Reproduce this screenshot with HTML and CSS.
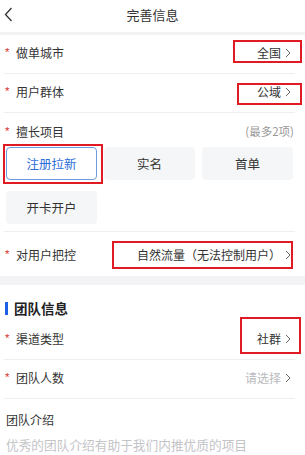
FILE: index.html
```html
<!DOCTYPE html>
<html lang="zh-CN">
<head>
<meta charset="utf-8">
<title>完善信息</title>
<link rel="stylesheet" href="styles.css">
</head>
<body>
<div class="page">
  <header class="topbar">
    <svg class="back" width="9" height="15" viewBox="0 0 9 15"><path d="M7.5 1 L1.5 7.5 L7.5 14" fill="none" stroke="#333" stroke-width="1.3"/></svg>
    <div class="title">完善信息</div>
  </header>
  <div class="band band-thin"></div>

  <section class="section">
    <div class="row">
      <div class="label"><span class="star">*</span>做单城市</div>
      <div class="value">全国<svg class="chev" width="6" height="10" viewBox="0 0 6 10"><path d="M1 1 L5 5 L1 9" fill="none" stroke="#666" stroke-width="1"/></svg></div>
      <span class="mark mark-city"></span>
    </div>
    <div class="row">
      <div class="label"><span class="star">*</span>用户群体</div>
      <div class="value">公域<svg class="chev" width="6" height="10" viewBox="0 0 6 10"><path d="M1 1 L5 5 L1 9" fill="none" stroke="#666" stroke-width="1"/></svg></div>
      <span class="mark mark-group"></span>
    </div>
    <div class="skills">
      <div class="skills-head">
        <div class="label"><span class="star">*</span>擅长项目</div>
        <div class="hint">(最多2项)</div>
      </div>
      <div class="chips">
        <div class="chip chip-on">注册拉新<span class="mark mark-chip"></span></div>
        <div class="chip">实名</div>
        <div class="chip">首单</div>
        <div class="chip">开卡开户</div>
      </div>
    </div>
    <div class="row row-tall">
      <div class="label"><span class="star">*</span>对用户把控</div>
      <div class="value">自然流量（无法控制用户）<svg class="chev" width="6" height="10" viewBox="0 0 6 10"><path d="M1 1 L5 5 L1 9" fill="none" stroke="#666" stroke-width="1"/></svg></div>
      <span class="mark mark-control"></span>
    </div>
  </section>

  <div class="band band-thick"></div>

  <section class="section">
    <div class="sec-title"><span class="bar"></span>团队信息</div>
    <div class="row">
      <div class="label"><span class="star">*</span>渠道类型</div>
      <div class="value">社群<svg class="chev" width="6" height="10" viewBox="0 0 6 10"><path d="M1 1 L5 5 L1 9" fill="none" stroke="#666" stroke-width="1"/></svg></div>
      <span class="mark mark-channel"></span>
    </div>
    <div class="row">
      <div class="label"><span class="star">*</span>团队人数</div>
      <div class="value value-empty">请选择<svg class="chev" width="6" height="10" viewBox="0 0 6 10"><path d="M1 1 L5 5 L1 9" fill="none" stroke="#666" stroke-width="1"/></svg></div>
    </div>
    <div class="intro">
      <div class="intro-label">团队介绍</div>
      <div class="intro-ph">优秀的团队介绍有助于我们内推优质的项目</div>
    </div>
  </section>
</div>
</body>
</html>
```

FILE: styles.css
```css
* { box-sizing: border-box; }
html, body { margin: 0; padding: 0; background: #fff; }
body {
  font-family: "Noto Sans CJK SC", "Noto Sans", "Liberation Sans", sans-serif;
  color: #333;
  width: 305px;
  overflow: hidden;
}
.page { width: 305px; height: 455px; overflow: hidden; }

.topbar {
  position: relative;
  height: 32px;
  display: flex;
  align-items: center;
  justify-content: center;
}
.back { position: absolute; left: 4px; top: 7px; }
.title { font-size: 13px; line-height: 17px; margin-top: -3px; color: #333; }

.band { background: #f3f3f5; }
.band-thin { height: 3px; }
.band-thick { height: 9px; }

.section { padding: 0 10px 0 4px; }

.row {
  position: relative;
  display: flex;
  align-items: center;
  justify-content: space-between;
  padding: 9px 4px 12px 1px;
  border-bottom: 1px solid #efeff1;
  line-height: 17px;
}
.row-tall { padding: 14px 4px 13px 1px; border-bottom: none; }

.label { font-size: 12px; color: #333; display: flex; align-items: center; }
.star {
  display: inline-block;
  width: 11px;
  color: #d9302c;
  font-size: 11.5px;
  font-family: "Liberation Sans", sans-serif;
}
.value {
  font-size: 12px;
  color: #333;
  display: flex;
  align-items: center;
}
.value-empty { color: #b9b9bd; }
.chev { margin-left: 4px; margin-top: 1px; }

.mark {
  position: absolute;
  border: 2px solid #e01b24;
  pointer-events: none;
}
.mark-city { right: -7px; top: 5px; width: 69px; height: 23px; }
.mark-group { right: -7px; top: 9px; width: 65px; height: 22px; }
.mark-control { right: 2px; top: 9px; width: 181px; height: 28px; }
.mark-channel { right: -6px; top: -4px; width: 61px; height: 37px; }
.mark-chip { left: -4px; top: -4px; width: 100px; height: 40px; }

.skills {
  padding: 10px 1px 7px 1px;
  border-bottom: 1px solid #efeff1;
}
.skills-head {
  display: flex;
  justify-content: space-between;
  align-items: center;
  line-height: 17px;
}
.hint { font-size: 11.5px; color: #999; }
.chips {
  margin-top: 7px;
  display: grid;
  grid-template-columns: repeat(3, 91px);
  column-gap: 7px;
  row-gap: 11px;
  padding-left: 1px;
}
.chip {
  position: relative;
  height: 33px;
  border-radius: 4px;
  background: #f5f6f8;
  display: flex;
  align-items: center;
  justify-content: center;
  font-size: 12.5px;
  color: #333;
}
.chip-on {
  background: #fff;
  border: 1px solid #6d9be0;
  color: #2d6ed8;
}

.sec-title {
  display: flex;
  align-items: center;
  padding: 15px 0 0 1px;
  margin-bottom: 4px;
  font-size: 13.5px;
  font-weight: bold;
  line-height: 17px;
  color: #222;
}
.bar {
  display: inline-block;
  width: 3px;
  height: 13px;
  background: #1f5fe6;
  margin-right: 6px;
}

.intro { padding: 12px 0 0 2px; line-height: 17px; }
.intro-label { font-size: 12px; color: #333; }
.intro-ph { margin-top: 8px; font-size: 12.7px; color: #c4c4c8; white-space: nowrap; }
```
